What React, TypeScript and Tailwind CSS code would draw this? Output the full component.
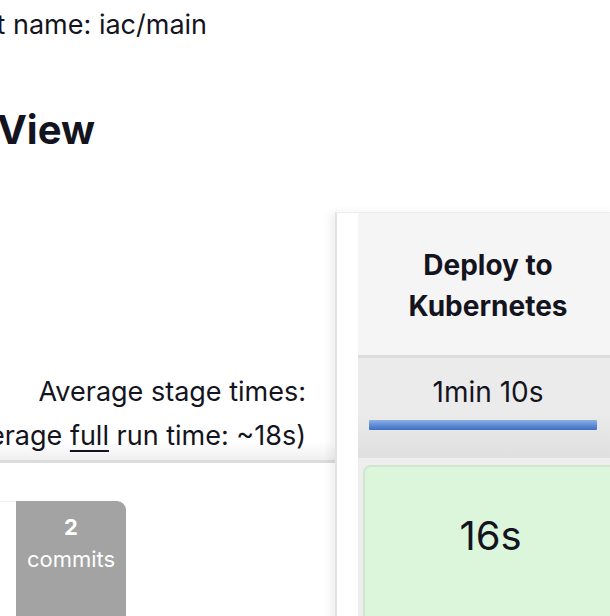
export default function App() {
  return (
    <div className="w-[610px] h-[616px] overflow-hidden bg-white text-[#14141f] [font-family:Inter,'Noto_Sans',sans-serif]">
      <div className="h-[50px] flex items-center text-[27px] leading-[34px]">
        <span className="w-[13px] shrink-0 flex justify-end overflow-hidden">
          <span className="shrink-0 whitespace-pre">Full project </span>
        </span>
        <span className="whitespace-pre">name: iac/main</span>
      </div>
      <div className="h-[162px] pt-[56px]">
        <h1 className="text-[40px] font-bold leading-[48px] -ml-[3px]">View</h1>
      </div>
      <div className="flex">
        <div className="w-[335px] shrink-0 flex flex-col">
          <div className="h-[146px]" />
          <div className="h-[102px] pt-[12px] pr-[29px] flex flex-col items-end text-[27px] leading-[44px] bg-[linear-gradient(#ffffff_82%,#efefef)]">
            <div className="whitespace-nowrap">Average stage times:</div>
            <div className="whitespace-nowrap">
              (Average <span className="underline underline-offset-[5px]">full</span> run time: ~18s)
            </div>
          </div>
          <div className="h-[3px] bg-[#dcdcdc]" />
          <div className="pt-[38px] flex">
            <div className="w-[16px] h-[200px] bg-white border-t border-[#f0f0f0]" />
            <div className="w-[110px] h-[200px] bg-[#a3a3a3] rounded-tr-[9px] flex flex-col items-center pt-[12px] text-white text-[22px]">
              <div className="font-bold leading-[28px]">2</div>
              <div className="leading-[36px]">commits</div>
            </div>
          </div>
        </div>
        <div className="flex-1 border-l-2 border-t border-l-[#e2e2e2] border-t-[#eeeeee] shadow-[-5px_0_8px_rgba(0,0,0,0.06)] pl-[21px] bg-white">
          <div className="w-[260px] flex flex-col">
            <div className="h-[142px] bg-[#f5f5f5] flex flex-col items-center justify-center font-bold text-[28px] leading-[41px] pt-[3px]">
              <div>Deploy to</div>
              <div>Kubernetes</div>
            </div>
            <div className="h-[3px] bg-[#dcdcdc]" />
            <div className="h-[100px] bg-[linear-gradient(#ebebeb_55%,#dfdfdf)] flex flex-col">
              <div className="h-[44px] pt-[12px] flex justify-center text-[28px] leading-[44px]">
                <span>1min 10s</span>
              </div>
              <div className="mt-[18px] ml-[11px] w-[228px] h-[10px] rounded-[1px] bg-[linear-gradient(#8fb1e3,#5c8ad6_55%,#3f6fc2)]" />
            </div>
            <div className="bg-[#eeeeee] pt-[7px] pl-[5px]">
              <div className="h-[200px] rounded-[8px] border-2 border-[#d3e5d0] bg-[#dcf6dc] flex justify-center pt-[44px] text-[40px] leading-[50px]">
                16s
              </div>
            </div>
          </div>
        </div>
      </div>
    </div>
  );
}
